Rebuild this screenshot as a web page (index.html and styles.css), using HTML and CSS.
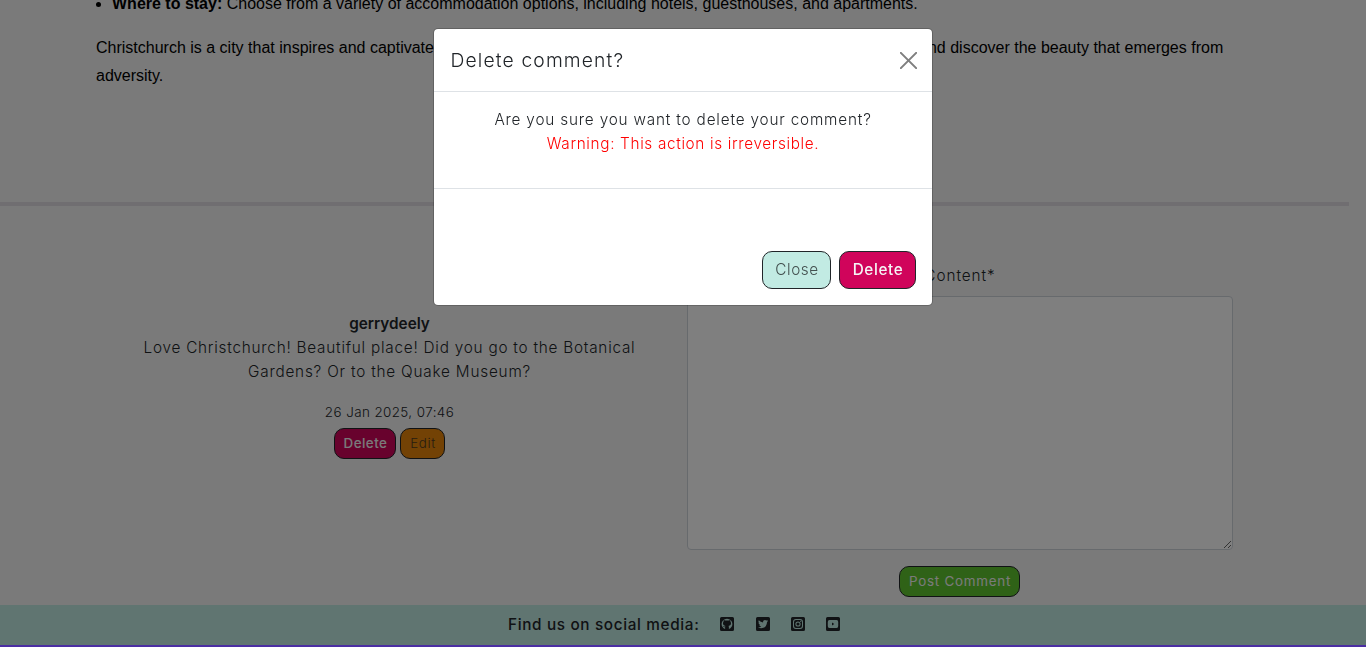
FILE: index.html
```html
<!DOCTYPE html>
<html lang="en">
<head>
<meta charset="utf-8">
<title>Christchurch</title>
<link rel="stylesheet" href="styles.css">
</head>
<body>
<div class="page">
  <article class="post">
    <ul class="post-list"><li><strong>Where to stay:</strong> Choose from a variety of accommodation options, including hotels, guesthouses, and apartments.</li></ul>
    <p class="post-text">Christchurch is a city that inspires and captivate<span class="gap"></span>nd discover the beauty that emerges from<br>adversity.</p>
  </article>
  <hr class="divider">
  <section class="comments">
    <div class="comment">
      <div class="author">gerrydeely</div>
      <p class="comment-text"><span class="line-a">Love Christchurch! Beautiful place! Did you go to the Botanical</span><br><span class="line-b">Gardens? Or to the Quake Museum?</span></p>
      <div class="date">26 Jan 2025, 07:46</div>
      <div class="actions">
        <button class="btn small danger">Delete</button>
        <button class="btn small edit">Edit</button>
      </div>
    </div>
    <form class="comment-form">
      <label class="label" for="content">Content*</label>
      <textarea id="content" class="field"></textarea>
      <button class="btn small post-btn" type="button">Post Comment</button>
    </form>
  </section>
  <footer class="footer">
    <span class="social-title">Find us on social media:</span>
    <svg class="icon" viewBox="0 0 14 14"><path fill-rule="evenodd" d="M1.5 0H12.5Q14 0 14 1.5V12.5Q14 14 12.5 14H1.5Q0 14 0 12.5V1.5Q0 0 1.5 0ZM5.1 12.1V10.2C3.8 10.5 3.4 9.5 3 9.1C3.8 8.8 4.2 9.9 5.1 9.6L5.5 8.9C3.7 8.6 3 7.7 3 6.2C3 5.5 3.2 5 3.6 4.5L3.7 2.9L5.3 3.6Q7 3.2 8.7 3.6L10.3 2.9L10.4 4.5C10.8 5 11 5.5 11 6.2C11 7.7 10.3 8.6 8.5 8.9Q8.9 9.3 8.9 10V12.1C11 11.4 12.4 9.4 12.4 7.1A5.4 5.4 0 0 0 1.6 7.1C1.6 9.4 3 11.4 5.1 12.1Z"/></svg>
    <svg class="icon" viewBox="0 0 14 14"><path fill-rule="evenodd" d="M1.5 0H12.5Q14 0 14 1.5V12.5Q14 14 12.5 14H1.5Q0 14 0 12.5V1.5Q0 0 1.5 0ZM12 4L10.9 4.3Q11.6 3.8 11.8 3.1L10.5 3.6C9 2.1 6.7 3.3 7.1 5.4Q4.6 5.2 2.8 3.2Q1.9 5 3.4 6.1L2.5 5.8Q2.5 7.3 4.2 7.9L3.3 8Q3.7 9.3 5.2 9.4Q3.9 10.4 2 10.3Q4 11.5 6.3 11.1Q10.8 10.2 11 5.2Z"/></svg>
    <svg class="icon" viewBox="0 0 14 14"><path fill-rule="evenodd" d="M1.5 0H12.5Q14 0 14 1.5V12.5Q14 14 12.5 14H1.5Q0 14 0 12.5V1.5Q0 0 1.5 0ZM5 2Q2 2 2 5V9Q2 12 5 12H9Q12 12 12 9V5Q12 2 9 2ZM5 3H9Q11 3 11 5V9Q11 11 9 11H5Q3 11 3 9V5Q3 3 5 3ZM7 4.4A2.6 2.6 0 1 0 7 9.6A2.6 2.6 0 1 0 7 4.4ZM7 5.4A1.6 1.6 0 1 1 7 8.6A1.6 1.6 0 1 1 7 5.4Z"/><circle class="lens" cx="9.7" cy="4.3" r=".6"/></svg>
    <svg class="icon" viewBox="0 0 14 14"><path fill-rule="evenodd" d="M1.5 0H12.5Q14 0 14 1.5V12.5Q14 14 12.5 14H1.5Q0 14 0 12.5V1.5Q0 0 1.5 0ZM3.4 3Q1.8 3 1.8 5V9Q1.8 11 3.4 11H10.6Q12.2 11 12.2 9V5Q12.2 3 10.6 3ZM6 5.6L8.3 7L6 8.4Z"/></svg>
  </footer>
</div>
<div class="backdrop">
  <div class="modal" role="dialog">
    <header class="modal-header">
      <h5 class="modal-title">Delete comment?</h5>
      <svg class="close" viewBox="0 0 16 16"><path d="M.8.8L15.2 15.2M15.2.8L.8 15.2"/></svg>
    </header>
    <div class="modal-body">
      <div class="question">Are you sure you want to delete your comment?</div>
      <div class="warning">Warning: This action is irreversible.</div>
    </div>
    <footer class="modal-footer">
      <button class="btn close-btn">Close</button>
      <button class="btn danger">Delete</button>
    </footer>
  </div>
  <div class="bottom-line"></div>
</div>
</body>
</html>
```
FILE: styles.css
```css
* { box-sizing: border-box; }
body {
  margin: 0;
  height: 647px;
  overflow: hidden;
  background: #f5f5f5;
  color: #212529;
  font: 340 15.3px/24px Inter, "Liberation Sans", sans-serif;
}
.page { width: 1349px; height: 647px; display: flex; flex-direction: column; }
.post {
  height: 212px;
  margin-top: -10px;
  padding-left: 96px;
  flex: none;
  color: #000;
  font: 400 16px/28px "Liberation Sans", Arial, sans-serif;
  white-space: nowrap;
}
.post-list { margin: 0 0 16px; padding-left: 16px; }
.post-text { margin: 0; }
.gap { display: inline-block; width: 494px; }
.divider { width: 1349px; height: 4px; margin: 0; border: 0; background: #e0dce2; flex: none; }
.comments { width: 1140px; margin: 0 auto; height: 399px; flex: none; display: grid; grid-template-columns: 570px 570px; text-align: center; }
.comment { padding-top: 106px; }
.author { font-weight: 600; }
.comment-text { margin: 0 0 16px; }
.line-a { letter-spacing: .77px; }
.line-b { letter-spacing: .8px; }
.date { font-size: 13.4px; line-height: 24px; letter-spacing: .42px; }
.actions { display: flex; justify-content: center; gap: 4px; margin-top: 4px; }
.comment-form { display: flex; flex-direction: column; align-items: center; padding: 58px 12px 0; }
.label { margin-bottom: 8px; padding-left: 1px; letter-spacing: .95px; }
.field { display: block; width: 546px; height: 254px; border: 1px solid #ced4da; border-radius: 4px; background: #fff; resize: vertical; }
.btn {
  display: flex;
  align-items: center;
  justify-content: center;
  height: 38px;
  padding: 0 0 1px 1px;
  border: 1px solid #212529;
  border-radius: 10px;
  color: #f5f5f5;
  font: 340 15.3px/24px Inter, "Liberation Sans", sans-serif;
  letter-spacing: .6px;
  white-space: nowrap;
}
.btn.small { height: 31px; font-size: 13.4px; }
.danger { width: 77px; background: #d0045b; font-weight: 500; }
.btn.small.danger { width: 62px; font-weight: 500; letter-spacing: .45px; }
.edit { width: 45px; background: #e6850a; color: #4f3a20; }
.btn.post-btn { width: 121px; margin-top: 16px; background: #5fc52e; font-weight: 400; letter-spacing: .75px; }
.btn.danger { font-weight: 500; }
.footer {
  height: 42px;
  width: 1366px;
  flex: none;
  padding: 0 0 4px 508px;
  display: flex;
  align-items: center;
  background: #c1ebe3;
}
.social-title { width: 212.3px; padding-top: 2px; font-weight: 500; letter-spacing: .66px; white-space: nowrap; }
.icon { width: 14px; height: 14px; margin-right: 21.4px; fill: #212529; flex: none; }
.lens { fill: #c1ebe3; }
.backdrop { position: fixed; inset: 0; background: rgba(0, 0, 0, .5); }
.bottom-line { position: absolute; left: 0; right: 0; bottom: 0; height: 2px; background: #4b2ea3; }
.modal {
  width: 500px;
  height: 278px;
  margin: 28px auto 0;
  background: #fff;
  background-clip: padding-box;
  border: 1px solid rgba(0, 0, 0, .2);
  border-radius: 5px;
}
.modal-header { height: 63px; padding: 0 15.5px 0 16.5px; display: flex; align-items: center; justify-content: space-between; border-bottom: 1px solid #dee2e6; }
.modal-title { margin: 0; font-size: 19.3px; font-weight: 340; line-height: 30px; letter-spacing: 1.14px; }
.close { width: 17px; height: 17px; fill: none; stroke: #7f7f7f; stroke-width: 1.9; stroke-linecap: round; }
.modal-body { height: 97px; padding-top: 16px; text-align: center; border-bottom: 1px solid #dee2e6; }
.question { letter-spacing: .82px; }
.warning { color: #f00; letter-spacing: .66px; }
.modal-footer { height: 116px; padding: 0 16px 16px 0; display: flex; justify-content: flex-end; align-items: flex-end; gap: 8px; }
.close-btn { width: 69px; background: #c2ebe3; color: #43504f; }
```
